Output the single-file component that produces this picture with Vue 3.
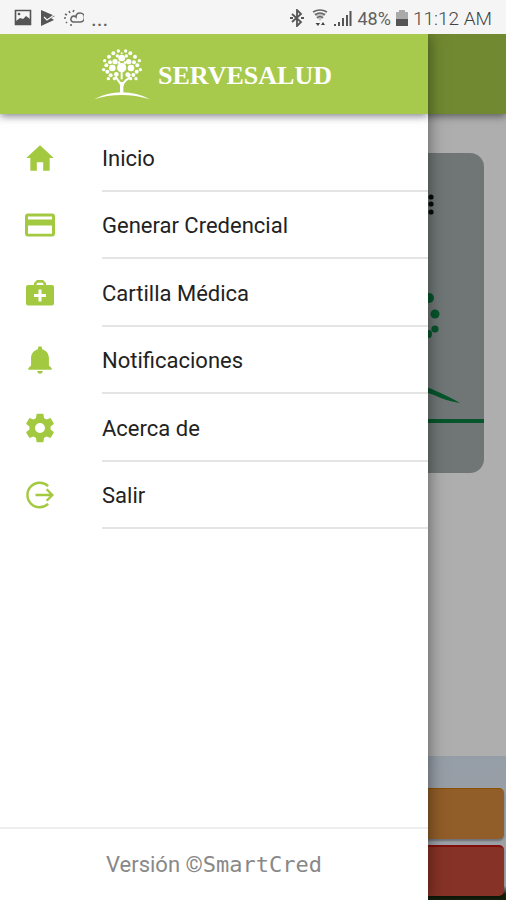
<template>
  <div class="screen">
    <div class="status-bar">
      <div class="status-left">
        <svg class="status-icon" viewBox="0 0 18 18">
          <path d="M1.500 1.500h15v14h-15z" fill="none" stroke="#555" stroke-width="1.600" />
          <path d="M2 12l4-3 3 1 3-3 4 3v5H2z" fill="#555" />
          <circle cx="5" cy="5" r="1.300" fill="#555" />
        </svg>
        <svg class="status-icon play" viewBox="0 0 18 18">
          <path d="M2 1l14 6-4 2 3 2L2 17z" fill="#555" />
          <path d="M5 8l3 3 7-5" fill="none" stroke="#f5f5f5" stroke-width="1.200" />
        </svg>
        <svg class="status-icon wide" viewBox="0 0 20 18">
          <path d="M9 13h7a4 4 0 0 0 0-9c-3 0-4 2-4 4a3 3 0 1 0-3 5z" fill="none" stroke="#666" stroke-width="1.600" />
          <path d="M5 2l1 2M1 5l2 1M10 1l-1 2M0 9h2M2 14l1-1M7 17v-2" stroke="#666" stroke-width="1.600" />
        </svg>
        <span class="dots">...</span>
      </div>
      <div class="status-right">
        <svg class="status-icon" viewBox="0 0 18 18">
          <path d="M4 5l9 8-4 4V1l4 4-9 8" fill="none" stroke="#555" stroke-width="1.800" />
          <path d="M2 9h3M13 9h3" stroke="#555" stroke-width="2" />
        </svg>
        <svg class="status-icon" viewBox="0 0 18 18">
          <path d="M2 3q7-4 14 0M4 6q5-4 10 0M6 9q3-3 6 0" fill="none" stroke="#666" stroke-width="1.600" />
          <path d="M9 12L3 4h12z" fill="#666" opacity=".35" />
          <path d="M4.500 14l2.500 3 2-3zM10 16l2-3 2 3z" fill="#444" />
        </svg>
        <svg class="status-icon" viewBox="0 0 18 18">
          <path d="M0 15h2v2H0zM4 13h2v4H4zM8 9h2v8H8zM12 6h2v11h-2zM15.500 2h2v15h-2z" fill="#555" />
        </svg>
        <span class="battery-text">48%</span>
        <svg class="status-icon battery" viewBox="0 0 12 18">
          <path d="M3 1h6v2h3v7H0V3h3z" fill="#aaa" />
          <path d="M0 10h12v7H0z" fill="#555" />
        </svg>
        <span class="clock">11:12 AM</span>
      </div>
    </div>

    <div class="app-body">
      <div class="page">
        <div class="page-header"></div>
        <div class="credential">
          <svg class="credential-art" width="462" height="320" viewBox="0 0 462 320">
            <g fill="#080a0a">
              <circle cx="409" cy="44" r="2.600" />
              <circle cx="409" cy="51" r="2.600" />
              <circle cx="409" cy="59" r="2.600" />
            </g>
            <g fill="#06552c">
              <circle cx="407" cy="145" r="5" />
              <circle cx="413" cy="161" r="4.500" />
              <circle cx="413" cy="176" r="3.600" />
              <ellipse cx="407" cy="181" rx="3" ry="4" />
              <path d="M390 234q10-3 24 4 14 6 24 12-14-2-26-8-10-4-22-4z" />
              <path d="M0 266h462v4H0z" />
            </g>
          </svg>
        </div>
        <div class="actions">
          <button class="action orange" type="button" aria-label="Credencial"></button>
          <button class="action red" type="button" aria-label="Emergencias"></button>
        </div>
      </div>

      <aside class="drawer">
        <header class="drawer-header">
          <svg class="tree" viewBox="12 18 168 162">
            <g fill="#fff">
              <circle v-for="(dot, index) in leaves" :key="index" :cx="dot[0]" :cy="dot[1]" :r="dot[2]" />
              <path d="M12 172q40-21 83-21 46 0 85 21-43-13-85-13-44 0-83 13z" />
            </g>
            <path d="M95 130L76 103M97 132q4-14 18-22l5-14M95 112v-22" fill="none" stroke="#fff" stroke-width="6" />
            <path d="M95 158v-38" stroke="#fff" stroke-width="10" />
          </svg>
          <span class="brand">SERVESALUD</span>
        </header>

        <nav class="menu">
          <a v-for="item in items" :key="item.label" class="menu-item" href="#">
            <svg class="menu-icon" :viewBox="item.box">
              <path :d="item.path" fill-rule="evenodd" />
            </svg>
            <span class="menu-label">{{ item.label }}</span>
          </a>
        </nav>

        <footer class="drawer-footer">
          <span>Versión ©</span><span class="product">SmartCred</span>
        </footer>
      </aside>
    </div>
  </div>
</template>

<script setup>
// x, y, radius of every leaf in the logo
const leaves = [
  [95, 77, 14], [95, 48, 10], [67, 78, 10], [123, 78, 10], [75, 59, 8], [116, 59, 8],
  [79, 97, 7], [113, 98, 7], [85, 27, 5], [107, 27, 5], [70, 34, 6], [121, 34, 6],
  [95, 34, 3], [57, 44, 6], [135, 44, 6], [82, 42, 5], [109, 42, 5], [60, 61, 6],
  [132, 61, 6], [44, 56, 5], [148, 56, 5], [49, 70, 6], [142, 70, 6], [41, 83, 5],
  [151, 83, 5], [52, 89, 6], [140, 89, 6], [62, 100, 6], [130, 99, 6], [55, 110, 5],
  [138, 110, 5], [73, 110, 5], [122, 110, 5], [87, 62, 4], [105, 62, 4]
];

const items = [
  {
    label: 'Inicio',
    box: '0 0 512 512',
    path: 'M208 448V320h96v128h97.600V256H464L256 64 48 256h62.400v192z'
  },
  {
    label: 'Generar Credencial',
    box: '0 0 34 34',
    path: 'M5 5.500h24a3 3 0 0 1 3 3v17a3 3 0 0 1-3 3H5a3 3 0 0 1-3-3v-17a3 3 0 0 1 3-3zM5 8.500v3h24v-3zM5 17.500v8.200h24v-8.200z'
  },
  {
    label: 'Cartilla Médica',
    box: '0 0 34 34',
    path: 'M5 9h6V7l3-3h6l3 3v2h6a2 2 0 0 1 2 2v16.500a2 2 0 0 1-2 2H5a2 2 0 0 1-2-2V11a2 2 0 0 1 2-2zM13.500 9h7V7.800l-1-1h-5l-1 1zM15.500 13.500v4.500H11v3h4.500v4.500h3V21H23v-3h-4.500v-4.500z'
  },
  {
    label: 'Notificaciones',
    box: '0 0 512 512',
    path: 'M256 464c22.779 0 41.411-18.719 41.411-41.600h-82.823c0 22.881 18.633 41.600 41.412 41.600zm134.589-124.800V224.800c0-63.440-44.516-117.518-103.530-131.041V79.200c0-17.682-13.457-31.200-31.059-31.200s-31.059 13.518-31.059 31.200v14.559c-59.015 13.523-103.530 67.601-103.530 131.041v114.400L80 380.800v20.800h352v-20.800z'
  },
  {
    label: 'Acerca de',
    box: '0 0 24 24',
    path: 'M19.430 12.980c.04-.32.07-.64.07-.98s-.03-.66-.07-.98l2.110-1.650c.19-.15.24-.42.12-.64l-2-3.460c-.12-.22-.39-.3-.61-.22l-2.490 1c-.52-.4-1.080-.73-1.690-.98l-.38-2.650C14.460 2.180 14.250 2 14 2h-4c-.25 0-.46.18-.49.42l-.38 2.650c-.61.25-1.170.59-1.690.98l-2.490-1c-.23-.09-.49 0-.61.22l-2 3.460c-.13.22-.07.49.12.64l2.110 1.650c-.04.32-.07.65-.07.98s.03.66.07.98l-2.110 1.650c-.19.15-.24.42-.12.64l2 3.460c.12.22.39.3.61.22l2.490-1c.52.4 1.080.73 1.690.98l.38 2.650c.03.24.24.42.49.42h4c.25 0 .46-.18.49-.42l.38-2.650c.61-.25 1.170-.59 1.690-.98l2.490 1c.23.09.49 0 .61-.22l2-3.460c.12-.22.07-.49-.12-.64l-2.110-1.650zM12 15.500c-1.930 0-3.500-1.570-3.500-3.500s1.570-3.500 3.500-3.500 3.500 1.570 3.500 3.500-1.570 3.500-3.500 3.500z'
  },
  {
    label: 'Salir',
    box: '0 0 34 34',
    path: 'M26 7.200A13.500 13.500 0 1 0 26 26.800L24.300 25.100A11.100 11.100 0 1 1 24.300 8.900zM12.500 15.800H26.500L22.800 12.100L24.500 10.400L31 17L24.500 23.600L22.800 21.900L26.500 18.200H12.500z'
  }
];
</script>

<style>
body {
  margin: 0;
}
</style>

<style scoped>
.screen {
  display: flex;
  flex-direction: column;
  min-height: 100vh;
  font-family: Roboto, "Liberation Sans", sans-serif;
}
.status-bar {
  display: flex;
  align-items: center;
  justify-content: space-between;
  height: 34px;
  padding: 2px 14px 0;
  box-sizing: border-box;
  background: #f5f5f5;
  color: #606060;
  font-size: 19px;
}
.status-left {
  display: flex;
  align-items: center;
  gap: 7px;
}
.status-right {
  display: flex;
  align-items: center;
  gap: 5px;
}
.status-icon {
  width: 18px;
  height: 18px;
}
.status-icon.wide {
  width: 20px;
}
.status-icon.battery {
  width: 12px;
}
.dots {
  font-size: 22px;
}
.battery-text {
  font-size: 18px;
}
.clock {
  font-weight: 300;
  color: #444;
}
.app-body {
  position: relative;
  display: flex;
  flex: 1;
  overflow: hidden;
}
.page {
  display: flex;
  flex: 1;
  flex-direction: column;
  background: #aeaeae;
}
.page-header {
  height: 80px;
  background: #718931;
  box-shadow: 0 2px 8px rgba(0, 0, 0, 0.5);
}
.credential {
  display: flex;
  justify-content: flex-end;
  height: 320px;
  margin: 39px 22px 0;
  border-radius: 14px;
  background: #707676;
  overflow: hidden;
}
.credential-art {
  flex-shrink: 0;
}
.actions {
  display: flex;
  flex-direction: column;
  gap: 6px;
  margin-top: auto;
  padding: 32px 2px 4px;
  background: linear-gradient(#959da6, #a0a4a8 90%, #14200c 96%);
}
.action {
  height: 51px;
  border: none;
  border-radius: 5px;
  box-shadow: 0 2px 2px rgba(0, 0, 0, 0.3);
}
.orange {
  background: #915d28;
  border-top: 1px solid #8a5000;
}
.red {
  background: #873226;
  border-top: 2px solid #800f0b;
}
.drawer {
  position: absolute;
  top: 0;
  bottom: 0;
  left: 0;
  right: 78px;
  display: flex;
  flex-direction: column;
  background: #fff;
  box-shadow: 0 0 16px rgba(0, 0, 0, 0.5);
}
.drawer-header {
  display: flex;
  align-items: center;
  justify-content: center;
  gap: 8px;
  height: 80px;
  padding: 2px 2px 0 0;
  box-sizing: border-box;
  background: #a7ca4c;
  box-shadow: 0 2px 8px rgba(40, 40, 60, 0.6);
  clip-path: inset(0 0 -16px 0);
}
.tree {
  width: 56px;
  height: 54px;
}
.brand {
  padding-top: 2px;
  color: #fff;
  font-family: "Liberation Serif", serif;
  font-size: 26px;
  font-weight: 700;
}
.menu {
  display: grid;
  grid-auto-rows: 1fr;
  min-height: 405px;
  margin-top: 10px;
}
.menu-item {
  display: flex;
  align-items: center;
  gap: 45px;
  padding-left: 23px;
  color: #222;
  font-size: 22px;
  text-decoration: none;
}
.menu-icon {
  flex-shrink: 0;
  width: 34px;
  height: 34px;
  fill: #a3c940;
}
.menu-label {
  display: flex;
  flex: 1;
  align-items: center;
  align-self: stretch;
  padding-top: 3px;
  border-bottom: 2px solid #e4e4e4;
}
.drawer-footer {
  display: flex;
  align-items: center;
  justify-content: center;
  height: 73px;
  margin-top: auto;
  box-sizing: border-box;
  border-top: 2px solid #eee;
  color: #888;
  font-size: 22px;
}
.product {
  font-family: "DejaVu Sans Mono", monospace;
}
</style>
